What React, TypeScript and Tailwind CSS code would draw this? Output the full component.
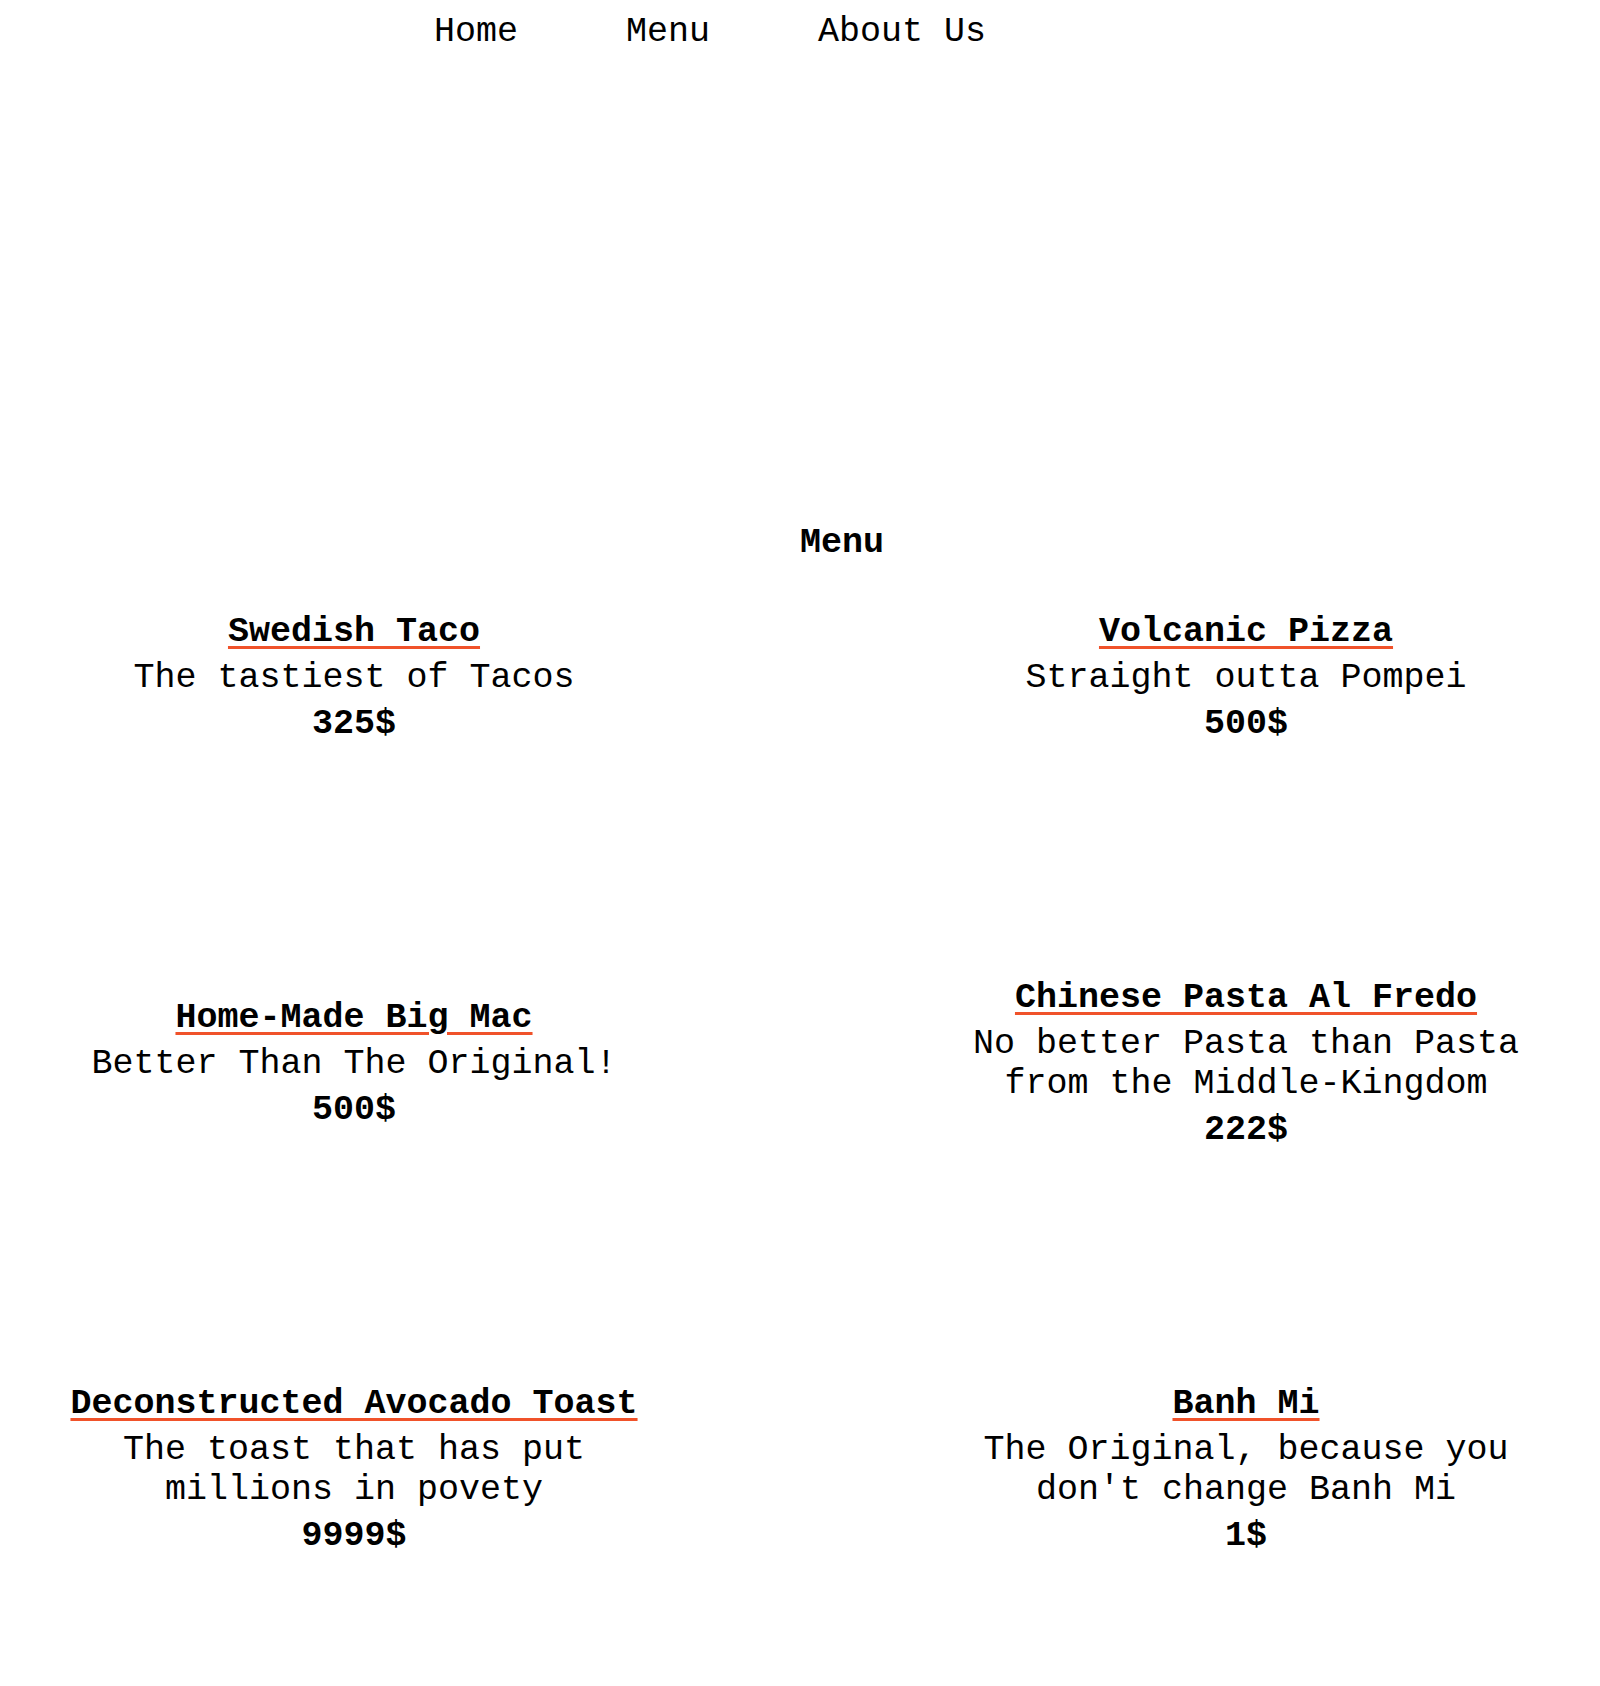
const items = [
  { name: "Swedish Taco", desc: "The tastiest of Tacos", price: "325$" },
  { name: "Volcanic Pizza", desc: "Straight outta Pompei", price: "500$" },
  { name: "Home-Made Big Mac", desc: "Better Than The Original!", price: "500$" },
  {
    name: "Chinese Pasta Al Fredo",
    desc: "No better Pasta than Pasta from the Middle-Kingdom",
    price: "222$",
  },
  {
    name: "Deconstructed Avocado Toast",
    desc: "The toast that has put millions in povety",
    price: "9999$",
  },
  {
    name: "Banh Mi",
    desc: "The Original, because you don't change Banh Mi",
    price: "1$",
  },
];

export default function App() {
  return (
    <div className="min-h-[1686px] bg-white text-black font-['Courier_New',_'Liberation_Mono',_monospace] text-[35px] leading-[40px]">
      <nav className="flex pl-[434px] pt-[12px] gap-[108px]">
        <a href="#">Home</a>
        <a href="#">Menu</a>
        <a href="#">About Us</a>
      </nav>

      <h2 className="mt-[471px] pl-[84px] text-center font-bold">Menu</h2>

      <div className="mt-[49px] grid grid-cols-2 gap-x-[292px] gap-y-[234px] px-[54px] items-center">
        {items.map((item) => (
          <div key={item.name} className="flex flex-col items-center gap-[6px] text-center">
            <h3 className="font-bold underline decoration-[#f0522a] decoration-[3px] underline-offset-[5px]">
              {item.name}
            </h3>
            <p>{item.desc}</p>
            <p className="font-bold">{item.price}</p>
          </div>
        ))}
      </div>
    </div>
  );
}
